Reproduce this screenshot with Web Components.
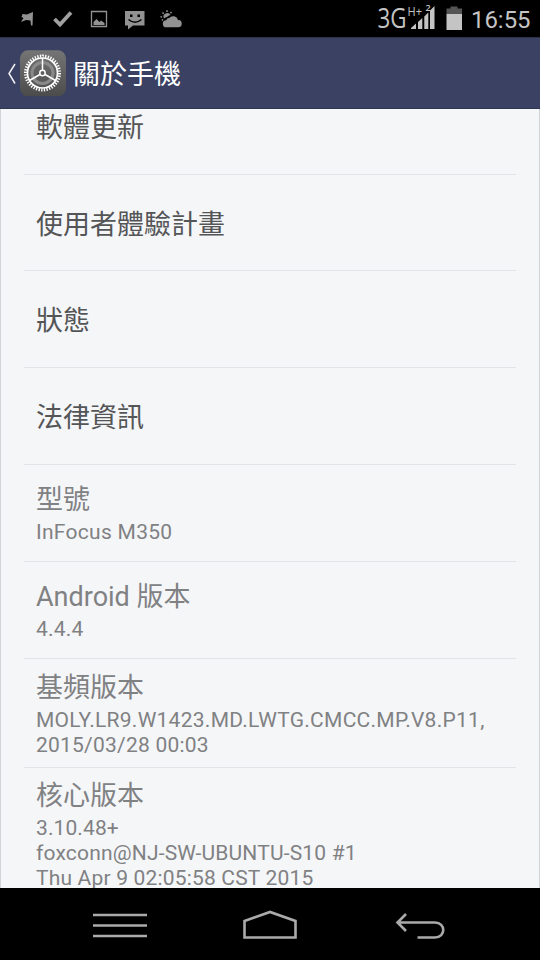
<!DOCTYPE html>
<html lang="zh-Hant">
<head>
<meta charset="utf-8">
<title>關於手機</title>
<style>
html,body{margin:0;padding:0;background:#000}
body{width:540px;height:960px;overflow:hidden;font-family:Roboto,"Noto Sans CJK TC",sans-serif}
</style>
</head>
<body>
<phone-screen>
  <status-bar slot="status" network="3G" time="16:55"></status-bar>
  <title-bar slot="header">關於手機</title-bar>
  <pref-item>軟體更新</pref-item>
  <pref-item style="--h:96px">使用者體驗計畫</pref-item>
  <pref-item>狀態</pref-item>
  <pref-item>法律資訊</pref-item>
  <pref-item info style="--top:18px">型號<info-line slot="summary" style="--ls:.28px">InFocus M350</info-line></pref-item>
  <pref-item info style="--top:17.500px">Android 版本<info-line slot="summary">4.4.4</info-line></pref-item>
  <pref-item info style="--top:12px;--h:109px">基頻版本<info-line slot="summary" style="--ls:.27px">MOLY.LR9.W1423.MD.LWTG.CMCC.MP.V8.P11,</info-line><info-line slot="summary">2015/03/28 00:03</info-line></pref-item>
  <pref-item info style="--top:11.400px;--h:140px">核心版本<info-line slot="summary" style="--ls:.1px">3.10.48+</info-line><info-line slot="summary" style="--ls:.18px">foxconn@NJ-SW-UBUNTU-S10 #1</info-line><info-line slot="summary" style="--ls:.18px">Thu Apr 9 02:05:58 CST 2015</info-line></pref-item>
  <nav-bar slot="nav"></nav-bar>
</phone-screen>
<script>
function define(name, html, setup) {
  customElements.define(name, class extends HTMLElement {
    constructor() {
      super();
      this.attachShadow({mode: 'open'}).innerHTML = html;
    }
    connectedCallback() { if (setup) setup(this, this.shadowRoot); }
  });
}

define('phone-screen', `
<style>
:host{display:flex;flex-direction:column;width:540px;height:960px;background:#000}
main{flex:1;min-height:0;overflow:hidden;background:#f5f6f8;box-sizing:border-box;border-left:1px solid #d3d4d8;border-right:1px solid #d3d4d8}
.list{margin:-31px 23px 0 23px}
</style>
<slot name="status"></slot><slot name="header"></slot>
<main><div class="list"><slot></slot></div></main>
<slot name="nav"></slot>`);

define('status-bar', `
<style>
:host{display:flex;height:37px;flex:none;background:#000;color:#c4c4c4;justify-content:space-between}
svg{display:block}
</style>
<svg width="190" height="37" fill="#929292">
  <path d="M22.500 14 27 14.500 33 12 32.500 25.500 31 25.500 30.500 20.500 26 20 21 22 23.500 18 21.500 17Z"/>
  <path d="M54.500 19 60 24.500 71 12.500" fill="none" stroke="#a0a0a0" stroke-width="3.800"/>
  <path d="M91.500 11.500H106.500V26.500H91.500Z" fill="none" stroke="#929292" stroke-width="1.300"/>
  <path d="M93.500 25V22L96.500 19 99.500 22 101 20.500 104.500 23V25Z"/>
  <path d="M125 11H144.500V25.500H133L128 29.500V25.500H125Z"/>
  <path d="M130 14.500h2.500v2.500h-2.500zM137.500 14.500h2.500v2.500h-2.500z" fill="#000"/>
  <path d="M128.500 19.500Q135 25 141.500 19.500" fill="none" stroke="#000" stroke-width="1.500"/>
  <path d="M166.500 27.300a3.500 3.500 0 0 1-.3-7 3 3 0 0 1 3-2.200 5 5 0 0 1 8.800 2 3.500 3.500 0 0 1 .3 7.200Z"/>
  <path d="M164 18.500a3.600 3.600 0 0 1 6.500-3.500 7 7 0 0 0-3.500 2 5 5 0 0 0-3 1.500Z"/>
  <path d="M160.500 16.800l1.500.2M162.500 12.500l1.200 1.200M167 10.300v1.700M171.500 12l-1 1.200M161.800 20.300l1.200-.8" fill="none" stroke="#929292" stroke-width="1.500"/>
</svg>
<svg width="170" height="37" viewBox="370 0 170 37" fill="#c4c4c4">
  <text class="net" x="377.500" y="28" font-family="Open Sans" font-size="27" textLength="29" lengthAdjust="spacingAndGlyphs"></text>
  <path d="M411 29V28L416 23.500V29ZM418 29V22L422.300 18V29ZM424.300 29V16.500L428.300 12.500V29ZM430 29V10.500L434.500 6V29Z"/>
  <text x="407.500" y="16" font-family="Open Sans" font-size="12.500" textLength="14.500" lengthAdjust="spacingAndGlyphs">H+</text>
  <text x="425.500" y="10.500" font-family="Open Sans" font-weight="600" font-size="9">2</text>
  <path d="M446.500 14V8.500H450.500V6.500H457.500V8.500H462V14Z" fill="#555"/>
  <path d="M446.500 14H462V30H446.500Z"/>
  <text class="time" x="471" y="28" font-family="Roboto" font-size="24.500" textLength="59.500" lengthAdjust="spacingAndGlyphs"></text>
</svg>`, (host, root) => {
  root.querySelector('.net').textContent = host.getAttribute('network');
  root.querySelector('.time').textContent = host.getAttribute('time');
});

define('title-bar', `
<style>
:host{display:flex;flex:none;box-sizing:border-box;height:72px;align-items:center;background:#3a4163;border-bottom:1px solid #303752;border-top:1px solid #2c3044;color:#fff;font:27px/40px "Noto Sans CJK TC",sans-serif}
svg{display:block;flex:none}
.label{margin-left:6px}
</style>
<svg width="67" height="70" viewBox="0 38 67 70">
  <defs><linearGradient id="tile" x1="0" y1="0" x2="0" y2="1"><stop offset="0" stop-color="#757575"/><stop offset="1" stop-color="#4b4b4b"/></linearGradient></defs>
  <path d="M15 64 9 73.500 15 83.500" fill="none" stroke="#f0f0f5" stroke-width="1.500"/>
  <rect x="20" y="50.300" width="46" height="46" rx="8" fill="url(#tile)"/>
  <g fill="none" stroke="#fff">
    <circle cx="42.500" cy="73" r="10.500" stroke="#8a8a8a" stroke-width="3"/>
    <circle cx="42.500" cy="73" r="15" stroke-width="1.700"/>
    <circle cx="42.500" cy="73" r="17" stroke-width="3" pathLength="80" stroke-dasharray="1 1"/>
    <circle cx="42.500" cy="73" r="2.700" stroke-width="1.500"/>
    <path d="M42.500 58V70M39.900 74.500 29.500 80.500M45.100 74.500 55.500 80.500" stroke-width="1.500"/>
  </g>
</svg>
<span class="label"><slot></slot></span>`);

define('pref-item', `
<style>
:host{display:flex;flex-direction:column;box-sizing:border-box;height:var(--h,97px);padding-left:12px;padding-top:4px;border-bottom:1px solid #e3e4e7;color:#545557;justify-content:center}
:host([info]){justify-content:flex-start;padding-top:var(--top);color:#808183}
:host(:last-of-type){border:0}
.title{font-size:27px;line-height:34px;height:34px;white-space:nowrap}
.summary{display:flex;flex-direction:column}
:host([info]) .summary{margin-top:3px}
</style>
<div class="title"><slot></slot></div><div class="summary"><slot name="summary"></slot></div>`);

define('info-line', `
<style>:host{display:block;font-size:21px;line-height:24.700px;letter-spacing:var(--ls,.22px);white-space:nowrap}</style>
<slot></slot>`);

define('nav-bar', `
<style>:host{display:flex;flex:none;height:72px;background:#000;border-top:1px solid #000;box-sizing:border-box}svg{display:block}</style>
<svg width="540" height="71" viewBox="0 889 540 71" fill="none" stroke="#aaa" stroke-width="2.600">
  <path d="M93 915H147M93 925.500H147M93 936H147"/>
  <path d="M244.500 921 270 912 295.500 921V937.500H244.500Z"/>
  <path d="M406 914 397.500 922.500 406 931M398 922.500H435C446 922.500 446 937.500 435 937.500H417.500"/>
</svg>`);
</script>
</body>
</html>
